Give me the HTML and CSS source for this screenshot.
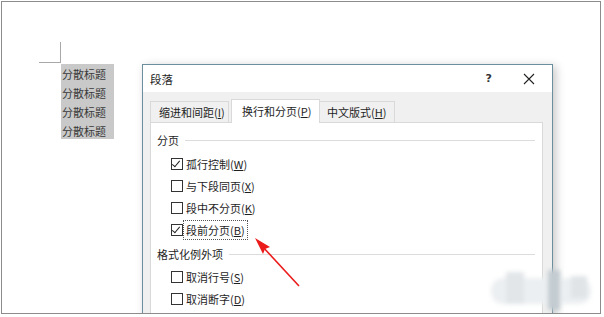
FILE: index.html
```html
<!DOCTYPE html>
<html>
<head>
<meta charset="utf-8">
<link rel="stylesheet" href="styles.css">
</head>
<body>
<div class="frame">
  <div class="doc">
    <div class="corner"></div>
    <div class="sel">
      <div>分散标题</div>
      <div>分散标题</div>
      <div>分散标题</div>
      <div>分散标题</div>
    </div>
  </div>

  <div class="dialog">
    <div class="titlebar">
      <span class="title">段落</span>
      <span class="help">?</span>
      <svg class="close" width="12" height="12" viewBox="0 0 12 12"><path d="M1 1 L11 11 M11 1 L1 11" stroke="#222" stroke-width="1.1" fill="none"/></svg>
    </div>
    <div class="body">
      <div class="tabs">
        <div class="tab t1">缩进和间距(<u>I</u>)</div>
        <div class="tab active t2">换行和分页(<u>P</u>)</div>
        <div class="tab t3">中文版式(<u>H</u>)</div>
      </div>
      <div class="panel">
        <div class="group">分页</div>
        <div class="row"><span class="cb checked"></span><span>孤行控制(<u>W</u>)</span></div>
        <div class="row"><span class="cb"></span><span>与下段同页(<u>X</u>)</span></div>
        <div class="row"><span class="cb"></span><span>段中不分页(<u>K</u>)</span></div>
        <div class="row"><span class="cb checked"></span><span class="focus">段前分页(<u>B</u>)</span></div>
        <div class="group g2">格式化例外项</div>
        <div class="row"><span class="cb"></span><span>取消行号(<u>S</u>)</span></div>
        <div class="row"><span class="cb"></span><span>取消断字(<u>D</u>)</span></div>
      </div>
    </div>
  </div>

  <svg class="arrow" width="604" height="317" viewBox="0 0 604 317">
    <line x1="299" y1="286" x2="262" y2="246" stroke="#ec1b1b" stroke-width="1.6"/>
    <path d="M255 238 L270 247 L265 249 L263 254 Z" fill="#ec1b1b"/>
  </svg>

  <div class="wm">
    <div class="wb w1"></div>
    <div class="wb w2"></div>
    <div class="wb w3"></div>
    <div class="wb w4"></div>
  </div>
</div>
</body>
</html>
```

FILE: styles.css
```css
html, body {
  margin: 0;
  padding: 0;
  background: #ffffff;
}
body {
  width: 604px;
  height: 317px;
  overflow: hidden;
  font-family: "Noto Sans CJK SC", "Noto Sans", sans-serif;
  font-size: 11px;
  color: #1e1e1e;
}
.frame {
  position: relative;
  margin: 1px 0 0 1px;
  width: 598px;
  height: 311px;
  border: 1px solid #8c8c8c;
  overflow: hidden;
  background: #fff;
}
.doc {
  padding: 40px 0 0 37px;
}
.corner {
  width: 21px;
  height: 20px;
  border-right: 1px solid #a8a8a8;
  border-bottom: 1px solid #a8a8a8;
}
.sel {
  margin: 1px 0 0 22px;
  width: 53px;
  height: 75px;
  padding-top: 1px;
  box-sizing: border-box;
  background: #c9c9c9;
  color: #3a3a3a;
}
.sel div {
  height: 19px;
  line-height: 19px;
  padding-left: 1px;
  font-size: 11px;
}

.dialog {
  position: absolute;
  left: 140px;
  top: 62px;
  width: 409px;
  height: 260px;
  border: 1px solid #6d8e9c;
  background: #f0f0f0;
  box-shadow: 3px 2px 9px rgba(0,0,0,0.22);
}
.titlebar {
  height: 27px;
  background: #ffffff;
  display: flex;
  align-items: center;
  padding-left: 7px;
}
.title {
  font-size: 11.5px;
  flex: 1;
}
.help {
  font-family: "DejaVu Sans", sans-serif;
  font-size: 11px;
  font-weight: bold;
  color: #333;
  margin-right: 31px;
}
.close {
  margin-right: 17px;
}
.body {
  padding: 6px 7px 0 7px;
}
.tabs {
  display: flex;
  align-items: flex-end;
  height: 24px;
}
.tab {
  height: 21px;
  line-height: 21px;
  border: 1px solid #d9d9d9;
  border-bottom: none;
  background: #f0f0f0;
  box-sizing: border-box;
  padding: 0 0 0 8px;
  white-space: nowrap;
  color: #1e1e1e;
}
.t1 {
  width: 79px;
  margin-right: 2px;
}
.tab.active {
  height: 24px;
  line-height: 23px;
  background: #ffffff;
  width: 89px;
  padding-left: 10px;
  margin-bottom: -1px;
  position: relative;
  z-index: 1;
}
.t3 {
  width: 75px;
  border-left: none;
  padding-left: 7px;
}
.tab u, .row u {
  text-decoration: underline;
  text-underline-offset: 1px;
}
.panel {
  width: 393px;
  height: 200px;
  border: 1px solid #d9d9d9;
  background: #ffffff;
  box-sizing: border-box;
  padding: 8px 7px 0 6px;
}
.group {
  display: flex;
  align-items: center;
  height: 18px;
  gap: 6px;
  color: #1e1e1e;
}
.group::after {
  content: "";
  flex: 1;
  height: 1px;
  background: #dcdcdc;
}
.g2 {
  margin-top: 4px;
  margin-bottom: 3px;
}
.group:first-child {
  margin-bottom: 4px;
}
.row {
  display: flex;
  align-items: center;
  height: 22px;
  padding-left: 14px;
}
.cb {
  width: 12px;
  height: 12px;
  border: 1px solid #333;
  box-sizing: border-box;
  margin-right: 2px;
  position: relative;
  background: #fff;
}
.cb.checked::after {
  content: "";
  position: absolute;
  left: 2px;
  top: 0px;
  width: 3px;
  height: 7px;
  border-right: 1px solid #222;
  border-bottom: 1px solid #222;
  transform: rotate(40deg);
  transform-origin: 50% 50%;
}
.row span:last-child {
  padding: 0 1px;
}
.focus {
  outline: 1px dotted #555;
  outline-offset: 1px;
}

.arrow {
  position: absolute;
  left: -2px;
  top: -2px;
  pointer-events: none;
}

.wm {
  position: absolute;
  left: 484px;
  top: 266px;
  width: 110px;
  height: 46px;
  filter: blur(2px);
}
.wb {
  position: absolute;
  background: #e6eaec;
}
.w1 { left: 5px; top: 10px; width: 100px; height: 26px; background: #eceff1; border-radius: 12px; }
.w2 { left: 20px; top: 4px; width: 18px; height: 32px; background: #e2e6e8; }
.w3 { left: 62px; top: 2px; width: 12px; height: 40px; background: #c3ccd1; }
.w4 { left: 85px; top: 8px; width: 16px; height: 22px; background: #e0e4e7; }
```
